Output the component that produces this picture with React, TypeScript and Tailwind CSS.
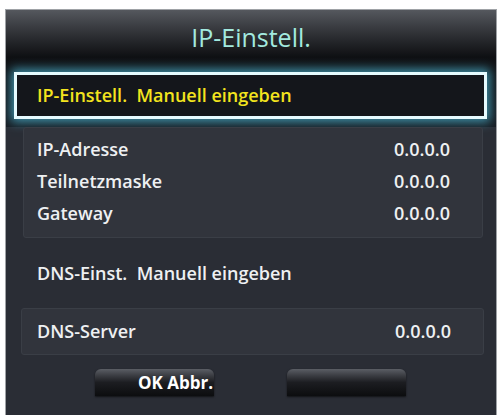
import React from 'react';

const font = { fontFamily: '"Open Sans", "Noto Sans", sans-serif' };

interface Row {
  label: string;
  value: string;
}

const ipRows: Row[] = [
  { label: 'IP-Adresse', value: '0.0.0.0' },
  { label: 'Teilnetzmaske', value: '0.0.0.0' },
  { label: 'Gateway', value: '0.0.0.0' },
];

function ValueRow({ label, value }: Row) {
  return (
    <div className="flex h-[32px] items-center justify-between pl-[13px] pr-[32px] text-[18px] font-semibold text-[#eef0f2]">
      <span>{label}</span>
      <span>{value}</span>
    </div>
  );
}

function TvButton({ children }: { children?: React.ReactNode }) {
  return (
    <div className="flex h-[27px] w-[119px] items-center justify-end rounded-t-[6px] bg-gradient-to-b from-[#5b5e65] via-[#1c1d21] to-[#0c0d0f] pr-[1px] text-[17px] font-bold leading-none text-white shadow-[0_1px_2px_rgba(0,0,0,0.6)]">
      {children}
    </div>
  );
}

export default function App() {
  return (
    <div className="h-[415px] w-[501px] bg-white pl-[5px] pt-[9px]" style={font}>
      <div className="flex h-[406px] w-[492px] flex-col overflow-hidden border-x border-t border-[#9fa2a6] bg-[#2a2d35]">
        <div className="bg-gradient-to-b from-[#55585e] via-[#0f1013] via-40% to-[#171b21] pb-[8px]">
          <div className="flex h-[56px] items-center justify-center pb-[2px] text-[25px] leading-none text-[#a3eadf]">
            IP-Einstell.
          </div>
          <div className="ml-[8px] mr-[9px] mt-[6px] flex h-[47px] items-center border-[3px] border-[#e6fbff] bg-[#14161b] pl-[20px] text-[18px] font-semibold text-[#f3e41e] shadow-[0_0_10px_3px_rgba(80,190,220,0.75)]">
            IP-Einstell.&nbsp; Manuell eingeben
          </div>
        </div>
        <div className="ml-[17px] mr-[13px] flex h-[111px] flex-col justify-center rounded-[3px] border border-[#3a3e46] bg-[#31343c] pb-[2px]">
          {ipRows.map((r) => (
            <ValueRow key={r.label} {...r} />
          ))}
        </div>
        <div className="flex h-[70px] items-center pl-[31px] pt-[1px] text-[18px] font-semibold text-[#eef0f2]">
          DNS-Einst.&nbsp; Manuell eingeben
        </div>
        <div className="ml-[15px] mr-[12px] flex h-[47px] items-center rounded-[3px] border border-[#3a3e46] bg-[#31343c]">
          <div className="w-full pl-[2px]">
            <ValueRow label="DNS-Server" value="0.0.0.0" />
          </div>
        </div>
        <div className="mt-[14px] flex gap-[73px] pl-[89px]">
          <TvButton>OK Abbr.</TvButton>
          <TvButton />
        </div>
      </div>
    </div>
  );
}
